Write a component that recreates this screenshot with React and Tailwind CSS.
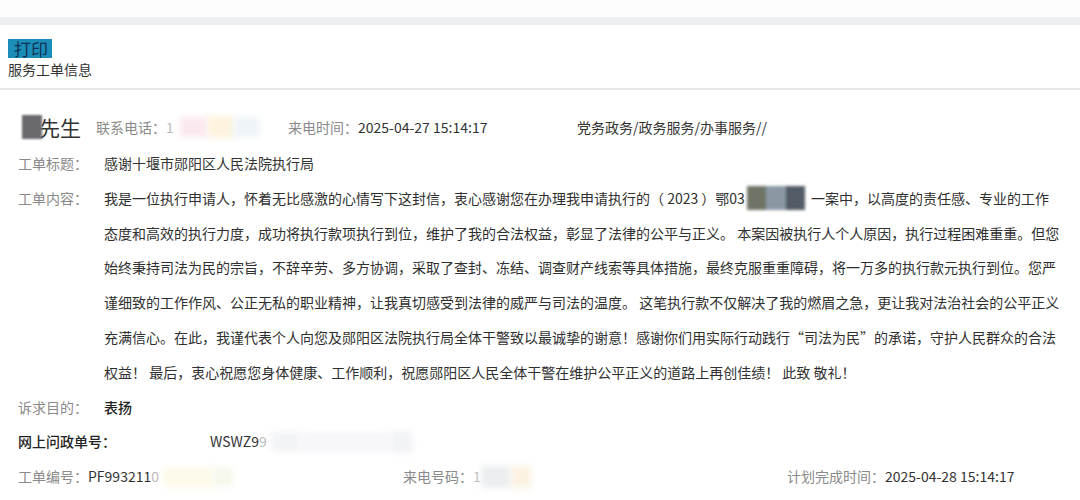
const lines = [
  null,
  "态度和高效的执行力度，成功将执行款项执行到位，维护了我的合法权益，彰显了法律的公平与正义。 本案因被执行人个人原因，执行过程困难重重。但您",
  "始终秉持司法为民的宗旨，不辞辛劳、多方协调，采取了查封、冻结、调查财产线索等具体措施，最终克服重重障碍，将一万多的执行款元执行到位。您严",
  "谨细致的工作作风、公正无私的职业精神，让我真切感受到法律的威严与司法的温度。 这笔执行款不仅解决了我的燃眉之急，更让我对法治社会的公平正义",
  "充满信心。在此，我谨代表个人向您及郧阳区法院执行局全体干警致以最诚挚的谢意！感谢你们用实际行动践行“司法为民”的承诺，守护人民群众的合法",
  "权益！ 最后，衷心祝愿您身体健康、工作顺利，祝愿郧阳区人民全体干警在维护公平正义的道路上再创佳绩！ 此致 敬礼！",
];

function Smudge({ className }) {
  return <span className={`inline-block align-middle blur-[3px] ${className}`} />;
}

export default function App() {
  return (
    <div className="w-[1080px] h-[500px] overflow-hidden bg-white text-[14px] text-[#2b2b2b]" style={{ fontFamily: '"Noto Sans CJK SC", "Noto Sans", sans-serif' }}>
      <div className="h-[17px] bg-[#fdfdfd]"></div>
      <div className="h-[8px] bg-[#eceef0]"></div>

      <div className="px-2 pt-[14px] h-[63px]">
        <span className="inline-block bg-[#1c8db8] text-[#0e3352] text-[17px] leading-[19px] pl-[6px] pr-[4px]">打印</span>
        <div className="leading-[18px] text-[#333] -mt-[1px]">服务工单信息</div>
      </div>
      <div className="h-[2px] bg-[#e6e7e9]"></div>

      <div className="pt-[18px] pl-[18px] leading-[34.8px]">
        <div className="flex items-center h-[38px] whitespace-nowrap">
          <div className="w-[78px] flex items-center pl-[4px]">
            <span className="inline-block w-[20px] h-[24px] bg-[#6a6a6e] blur-[1px]"></span>
            <span className="text-[21px] leading-[24px] text-[#333] -ml-[3px]">先生</span>
          </div>
          <div className="w-[192px] flex items-center text-[#8a8a8a]">
            联系电话：<span className="text-[#bbb]">1</span>
            <Smudge className="w-[28px] h-[20px] bg-[#fbe9ef] ml-[6px]" />
            <Smudge className="w-[26px] h-[22px] bg-[#fdf3de]" />
            <Smudge className="w-[26px] h-[20px] bg-[#eef4f8]" />
          </div>
          <div className="w-[289px] flex items-center">
            <span className="text-[#8a8a8a]">来电时间：</span>
            <span className="text-[#333]">2025-04-27 15:14:17</span>
          </div>
          <div className="text-[#333]">党务政务/政务服务/办事服务//</div>
        </div>

        <div className="grid grid-cols-[86px_1fr]">
          <div className="text-[#8a8a8a]">工单标题：</div>
          <div className="text-[#333]">感谢十堰市郧阳区人民法院执行局</div>

          <div className="text-[#8a8a8a]">工单内容：</div>
          <div className="text-[#2f2f2f] whitespace-nowrap">
            <div className="flex items-center">
              我是一位执行申请人，怀着无比感激的心情写下这封信，衷心感谢您在办理我申请执行的（ 2023 ）鄂03
              <span className="inline-flex h-[24px] w-[58px] blur-[1.5px] ml-[2px] mr-[6px]">
                <span className="flex-1 bg-[#6f7566]"></span>
                <span className="flex-1 bg-[#8b98a4]"></span>
                <span className="flex-1 bg-[#535c66]"></span>
              </span>
              一案中，以高度的责任感、专业的工作
            </div>
            {lines.slice(1).map((l, i) => (
              <div key={i}>{l}</div>
            ))}
          </div>

          <div className="text-[#8a8a8a]">诉求目的：</div>
          <div className="text-[#222] font-medium">表扬</div>
        </div>

        <div className="flex items-center whitespace-nowrap h-[34.8px]">
          <div className="w-[192px] text-[#222] font-medium">网上问政单号：</div>
          <div className="flex items-center">
            <span className="text-[#333]">WSWZ9</span><span className="text-[#bbb]">9</span>
            <Smudge className="w-[30px] h-[20px] bg-[#f3f4f6] ml-[4px]" />
            <Smudge className="w-[90px] h-[20px] bg-[#f6f6fb]" />
            <Smudge className="w-[22px] h-[22px] bg-[#f2f3f6]" />
          </div>
        </div>

        <div className="flex items-center whitespace-nowrap h-[34.8px]">
          <div className="w-[385px] flex items-center">
            <span className="text-[#8a8a8a]">工单编号：</span>
            <span className="text-[#333]">PF993211</span><span className="text-[#bbb]">0</span>
            <Smudge className="w-[50px] h-[20px] bg-[#fdfaea] ml-[4px]" />
            <Smudge className="w-[20px] h-[20px] bg-[#f6f8ec]" />
          </div>
          <div className="w-[384px] flex items-center">
            <span className="text-[#8a8a8a]">来电号码：</span><span className="text-[#bbb]">1</span>
            <Smudge className="w-[30px] h-[22px] bg-[#eceef0]" />
            <Smudge className="w-[20px] h-[22px] bg-[#fbf2e2]" />
          </div>
          <div className="flex items-center">
            <span className="text-[#8a8a8a]">计划完成时间：</span>
            <span className="text-[#333]">2025-04-28 15:14:17</span>
          </div>
        </div>
      </div>
    </div>
  );
}
